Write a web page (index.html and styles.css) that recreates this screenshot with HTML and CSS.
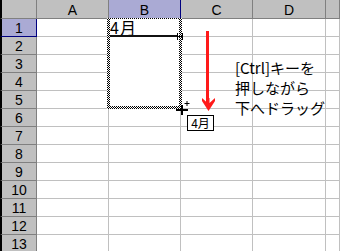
FILE: index.html
```html
<!DOCTYPE html>
<html lang="ja">
<head>
<meta charset="utf-8">
<link rel="stylesheet" href="styles.css">
</head>
<body>
<div class="sheet">
  <div class="grid">
    <div class="hdr corner"></div>
    <div class="hdr col">A</div>
    <div class="hdr col sel">B</div>
    <div class="hdr col">C</div>
    <div class="hdr col">D</div>
    <div class="hdr col"></div>

    <div class="hdr row sel">1</div><div class="cell"></div><div class="cell"></div><div class="cell"></div><div class="cell"></div><div class="cell"></div>
    <div class="hdr row">2</div><div class="cell"></div><div class="cell"></div><div class="cell"></div><div class="cell"></div><div class="cell"></div>
    <div class="hdr row">3</div><div class="cell"></div><div class="cell"></div><div class="cell"></div><div class="cell"></div><div class="cell"></div>
    <div class="hdr row">4</div><div class="cell"></div><div class="cell"></div><div class="cell"></div><div class="cell"></div><div class="cell"></div>
    <div class="hdr row">5</div><div class="cell"></div><div class="cell"></div><div class="cell"></div><div class="cell"></div><div class="cell"></div>
    <div class="hdr row">6</div><div class="cell"></div><div class="cell"></div><div class="cell"></div><div class="cell"></div><div class="cell"></div>
    <div class="hdr row">7</div><div class="cell"></div><div class="cell"></div><div class="cell"></div><div class="cell"></div><div class="cell"></div>
    <div class="hdr row">8</div><div class="cell"></div><div class="cell"></div><div class="cell"></div><div class="cell"></div><div class="cell"></div>
    <div class="hdr row">9</div><div class="cell"></div><div class="cell"></div><div class="cell"></div><div class="cell"></div><div class="cell"></div>
    <div class="hdr row">10</div><div class="cell"></div><div class="cell"></div><div class="cell"></div><div class="cell"></div><div class="cell"></div>
    <div class="hdr row">11</div><div class="cell"></div><div class="cell"></div><div class="cell"></div><div class="cell"></div><div class="cell"></div>
    <div class="hdr row">12</div><div class="cell"></div><div class="cell"></div><div class="cell"></div><div class="cell"></div><div class="cell"></div>
    <div class="hdr row">13</div><div class="cell"></div><div class="cell"></div><div class="cell"></div><div class="cell"></div><div class="cell"></div>
  </div>

  <div class="marquee"><div class="marquee-inner"></div></div>
  <div class="b1-text">4月</div>
  <div class="b1-line"></div>
  <svg class="handle" width="6" height="7" viewBox="0 0 6 7"><path d="M0.5 0v7M5.5 0v7M0 3.5h6" stroke="#000" stroke-width="1" fill="none"/></svg>

  <svg class="arrow" width="14" height="82" viewBox="0 0 14 82">
    <rect x="4" y="0" width="3" height="74" fill="#ff1a1a"/>
    <path d="M0 67 L5.5 72 L5.5 67 L7.5 67 L7.5 72 L13 67 L13 70 L6.5 80 L0 70 Z" fill="#ff1a1a"/>
  </svg>

  <svg class="cursor" width="18" height="18" viewBox="0 0 18 18">
    <path d="M7 5h2v10h-2z M2 9h12v2h-12z" fill="#000"/>
    <path d="M13 1v5M10.5 3.5h5" stroke="#000" stroke-width="1" fill="none"/>
  </svg>

  <div class="tip">4月</div>

  <div class="note">[Ctrl]キーを<br>押しながら<br>下へドラッグ</div>
</div>
</body>
</html>
```

FILE: styles.css
```css
html, body {
  margin: 0;
  padding: 0;
  background: #fff;
}

.sheet {
  position: relative;
  width: 340px;
  height: 251px;
  overflow: hidden;
  font-family: "Liberation Sans", "Noto Sans CJK JP", sans-serif;
}

.grid {
  display: grid;
  grid-template-columns: 37px 72px 72px 72px 73px 14px;
  grid-template-rows: 19px repeat(13, 18px);
}

.grid > div {
  box-sizing: border-box;
  border-right: 1px solid #c0c0c0;
  border-bottom: 1px solid #c0c0c0;
}

.grid > .hdr {
  background: #c0c0c0;
  border-right-color: #808080;
  border-bottom-color: #808080;
  color: #000;
  font-size: 14px;
  display: flex;
  align-items: center;
  justify-content: center;
  line-height: 1;
}

.grid > .corner,
.grid > .row {
  border-left: 2px solid #000;
}

.grid > .col {
  padding-top: 1px;
}

.grid > .hdr.sel {
  background: #aaaad4;
  border-right-color: #000080;
}

.grid > .row.sel {
  border-bottom-color: #000080;
}

.grid > .cell {
  background: #fff;
}

.marquee {
  position: absolute;
  left: 107px;
  top: 18px;
  width: 75px;
  height: 91px;
  box-sizing: border-box;
  padding: 1px 3px 3px 3px;
  background: repeating-conic-gradient(#000 0 25%, #fff 0 50%) 0 0 / 2px 2px;
}

.marquee-inner {
  width: 100%;
  height: 100%;
  background: #fff;
}

.b1-text {
  position: absolute;
  left: 110px;
  top: 19px;
  font-family: "Noto Sans CJK JP", sans-serif;
  font-size: 16px;
  line-height: 17px;
  letter-spacing: 1px;
  color: #000;
}

.b1-line {
  position: absolute;
  left: 110px;
  top: 35px;
  width: 68px;
  height: 2px;
  background: #111;
}

.handle {
  position: absolute;
  left: 177px;
  top: 33px;
}

.arrow {
  position: absolute;
  left: 202px;
  top: 31px;
}

.cursor {
  position: absolute;
  left: 174px;
  top: 100px;
}

.tip {
  position: absolute;
  left: 187px;
  top: 115px;
  width: 27px;
  height: 16px;
  box-sizing: border-box;
  border: 1px solid #000;
  background: #fff;
  font-family: "Noto Sans CJK JP", sans-serif;
  font-size: 12px;
  line-height: 14px;
  text-align: center;
  color: #000;
}

.note {
  position: absolute;
  left: 235px;
  top: 58px;
  font-family: "Noto Sans CJK JP", sans-serif;
  font-size: 15px;
  line-height: 20px;
  color: #000;
  white-space: nowrap;
}
```
